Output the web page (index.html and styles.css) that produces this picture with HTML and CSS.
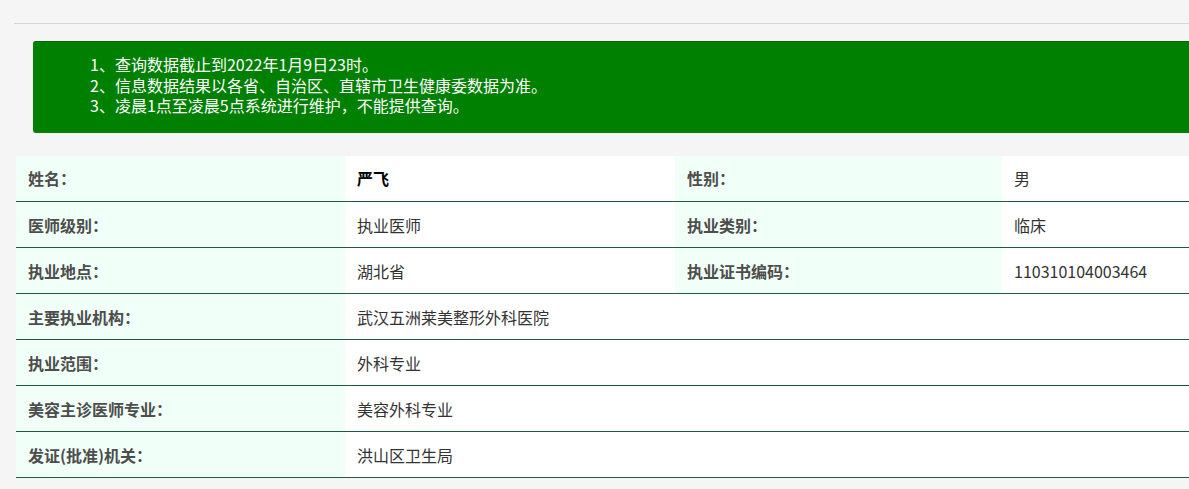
FILE: index.html
```html
<!DOCTYPE html>
<html lang="zh-CN">
<head>
<meta charset="utf-8">
<title>医师执业信息查询</title>
<link rel="stylesheet" href="styles.css">
</head>
<body>
<div class="page">
  <div class="topbar"></div>
  <div class="notice">
    <ul class="notice-list">
      <li>1、查询数据截止到2022年1月9日23时。</li>
      <li>2、信息数据结果以各省、自治区、直辖市卫生健康委数据为准。</li>
      <li>3、凌晨1点至凌晨5点系统进行维护，不能提供查询。</li>
    </ul>
  </div>
  <table class="info">
    <colgroup>
      <col class="c1"><col class="c2"><col class="c3"><col class="c4">
    </colgroup>
    <tbody>
      <tr>
        <th>姓名：</th><td class="name">严飞</td>
        <th>性别：</th><td>男</td>
      </tr>
      <tr>
        <th>医师级别：</th><td>执业医师</td>
        <th>执业类别：</th><td>临床</td>
      </tr>
      <tr>
        <th>执业地点：</th><td>湖北省</td>
        <th>执业证书编码：</th><td>110310104003464</td>
      </tr>
      <tr>
        <th>主要执业机构：</th><td colspan="3">武汉五洲莱美整形外科医院</td>
      </tr>
      <tr>
        <th>执业范围：</th><td colspan="3">外科专业</td>
      </tr>
      <tr>
        <th>美容主诊医师专业：</th><td colspan="3">美容外科专业</td>
      </tr>
      <tr>
        <th>发证(批准)机关：</th><td colspan="3">洪山区卫生局</td>
      </tr>
    </tbody>
  </table>
</div>
</body>
</html>
```

FILE: styles.css
```css
html {
  overflow: hidden;
}
body {
  margin: 0;
  background: #f5f5f5;
  font-family: "Noto Sans CJK SC", "Microsoft YaHei", sans-serif;
  color: #333;
}
.page {
  width: 1340px;
}
.topbar {
  height: 23px;
  margin-left: 14px;
  border-bottom: 1px solid #d6d6d6;
}
.notice {
  margin: 17px 0 0 33px;
  background: #008000;
  border-top: 1px solid #006a00;
  border-radius: 3px 0 0 3px;
  padding: 12px 15px 17px;
  color: #fff;
}
.notice-list {
  list-style: none;
  margin: 0;
  padding: 0 0 0 42px;
  font-size: 16px;
  line-height: 20.5px;
}
.notice-list li {
  height: 20.5px;
  overflow: visible;
}
.info {
  margin: 23px 0 0 16px;
  border-collapse: collapse;
  table-layout: fixed;
  width: 1324px;
  font-size: 16px;
}
.c1 { width: 329px; }
.c2 { width: 330px; }
.c3 { width: 327px; }
.c4 { width: 338px; }
.info th,
.info td {
  height: 46px;
  padding: 0 12px;
  text-align: left;
  vertical-align: middle;
  border-bottom: 1px solid #1e5a3e;
  box-sizing: border-box;
}
.info th {
  background: #f0fff7;
  color: #4d4d4d;
  font-weight: bold;
}
.info td {
  background: #fff;
  color: #333;
  font-weight: normal;
}
.info td.name {
  color: #000;
  font-weight: bold;
}
```
